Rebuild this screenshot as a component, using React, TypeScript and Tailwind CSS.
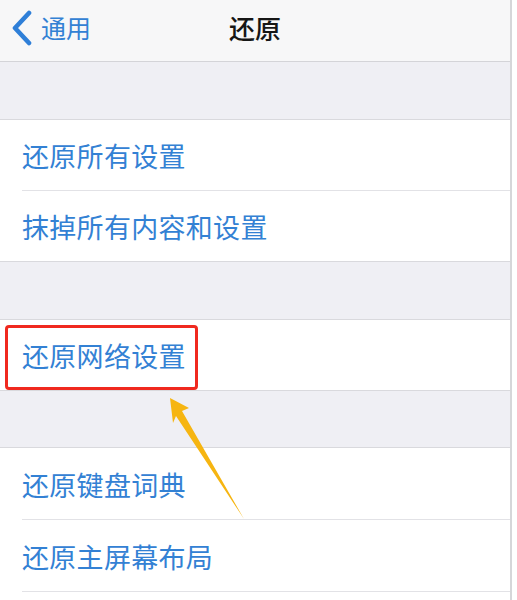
import React from "react";

const font = { fontFamily: '"Noto Sans CJK SC", "Noto Sans", sans-serif' };

function Row({ label, last, h = "h-[71px]" }: { label: string; last?: boolean; h?: string }) {
  return (
    <div className={`relative ${h} bg-white flex items-center pl-[22px]`}>
      <span className="text-[27px] leading-none text-[#3381d4] tracking-[0.3px]">{label}</span>
      <div
        className={
          last
            ? "absolute bottom-0 left-0 right-0 h-px bg-[#d9d9dd]"
            : "absolute bottom-0 left-[22px] right-0 h-px bg-[#e2e2e6]"
        }
      />
    </div>
  );
}

function Gap({ h }: { h: string }) {
  return <div className={`${h} bg-[#efeff4] border-b border-[#d9d9dd]`} />;
}

export default function App() {
  return (
    <div className="relative w-[517px] h-[600px] bg-white overflow-hidden flex" style={font}>
      <div className="w-[510px] flex flex-col">
        <div className="relative h-[62px] bg-[#f7f7f8] border-b border-[#d4d4d8] flex items-center">
          <div className="flex items-center pl-[11px] gap-[8px]">
            <svg width="22" height="36" viewBox="0 0 22 36" className="-mt-[6px]">
              <path d="M18 3 L4 18 L18 33" fill="none" stroke="#2f7fd8" strokeWidth="4.6" strokeLinecap="round" strokeLinejoin="round" />
            </svg>
            <span className="text-[25px] leading-none text-[#3381d4] -mt-[6px]">通用</span>
          </div>
          <div className="absolute inset-x-0 top-0 bottom-0 flex items-center justify-center pointer-events-none">
            <span className="text-[26px] leading-none font-medium text-[#161616] -mt-[6px]">还原</span>
          </div>
        </div>
        <Gap h="h-[58px]" />
        <Row label="还原所有设置" />
        <Row label="抹掉所有内容和设置" last />
        <Gap h="h-[58px]" />
        <Row label="还原网络设置" last />
        <Gap h="h-[57px]" />
        <Row label="还原键盘词典" h="h-[72px]" />
        <Row label="还原主屏幕布局" h="h-[72px]" />
      </div>
      <div className="w-[2px] bg-[#d6d6d9]" />
      <div className="flex-1 bg-white" />

      {/* red highlight box */}
      <div className="absolute left-[5px] top-[325px] w-[193px] h-[65px] border-[3px] border-[#f0291f] rounded-[4px]" />

      {/* yellow arrow */}
      <svg className="absolute left-0 top-0 pointer-events-none" width="517" height="600" viewBox="0 0 517 600">
        <polygon points="170,398 189,408 182,411 244,519 176,416 173,423" fill="#f6b511" />
      </svg>
    </div>
  );
}
